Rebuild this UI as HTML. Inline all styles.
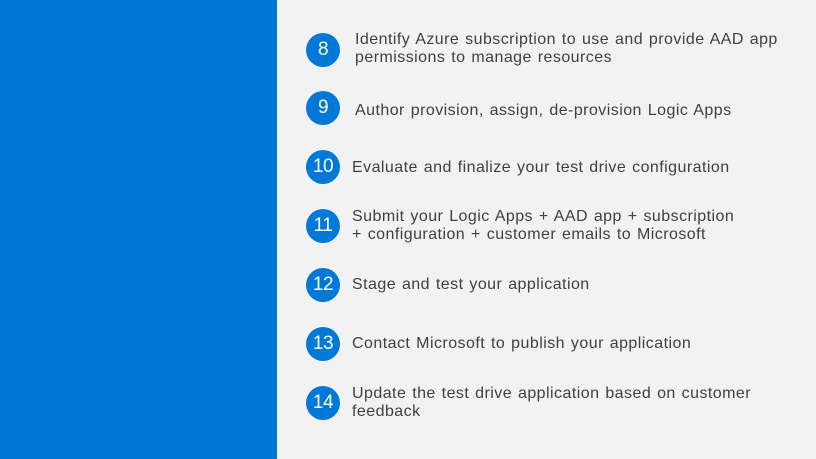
<!DOCTYPE html>
<html><head><style>
body{margin:0;width:816px;height:459px;background:#f2f2f2;position:relative;overflow:hidden;font-family:"Liberation Sans",sans-serif;}
.blue{position:absolute;left:0;top:0;width:277px;height:459px;background:#0078d7;}
.c{position:absolute;left:306px;width:34px;height:34px;border-radius:50%;background:#0078d7;color:#fff;font-size:19px;line-height:34px;text-align:center;letter-spacing:-0.5px}
.t{position:absolute;color:#404040;font-size:16px;line-height:18px;white-space:nowrap;letter-spacing:0.45px;word-spacing:1px}
</style></head><body>
<div class="blue"></div>
<div class="c" style="top:33px">8</div>
<div class="t" style="left:355px;top:31px">Identify Azure subscription to use and provide AAD app<br>permissions to manage resources</div>
<div class="c" style="top:91px">9</div>
<div class="t" style="left:355px;top:102px">Author provision, assign, de-provision Logic Apps</div>
<div class="c" style="top:150px">10</div>
<div class="t" style="left:352px;top:159px">Evaluate and finalize your test drive configuration</div>
<div class="c" style="top:209px">11</div>
<div class="t" style="left:352px;top:208px">Submit your Logic Apps + AAD app + subscription<br>+ configuration + customer emails to Microsoft</div>
<div class="c" style="top:268px">12</div>
<div class="t" style="left:352px;top:276px">Stage and test your application</div>
<div class="c" style="top:327px">13</div>
<div class="t" style="left:352px;top:335px">Contact Microsoft to publish your application</div>
<div class="c" style="top:386px">14</div>
<div class="t" style="left:352px;top:385px">Update the test drive application based on customer<br>feedback</div>
</body></html>
